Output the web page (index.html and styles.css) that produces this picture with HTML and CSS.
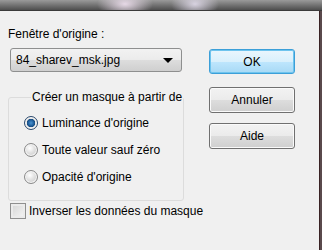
FILE: index.html
```html
<!DOCTYPE html>
<html lang="fr">
    <head>
        <meta charset="UTF-8" />
        <title>Masque</title>
        <link rel="stylesheet" href="styles.css">
    </head>
    <body>
        <div class="titlebar"></div>
        <div class="dialog">
            <div class="main">
                <div class="caption">Fenêtre d'origine :</div>
                <div class="select">
                    <span>84_sharev_msk.jpg</span>
                    <span class="arrow"></span>
                </div>
                <fieldset class="group">
                    <legend>Créer un masque à partir de</legend>
                    <label class="radio checked"><span class="dot"></span>Luminance d'origine</label>
                    <label class="radio"><span class="dot"></span>Toute valeur sauf zéro</label>
                    <label class="radio"><span class="dot"></span>Opacité d'origine</label>
                </fieldset>
                <label class="check"><span class="box"></span>Inverser les données du masque</label>
            </div>
            <div class="buttons">
                <button class="btn default">OK</button>
                <button class="btn cancel">Annuler</button>
                <button class="btn help">Aide</button>
            </div>
        </div>
    </body>
</html>
```

FILE: styles.css
```css
body {
    margin: 0;
    width: 322px;
    height: 250px;
    overflow: hidden;
    background: #5a4a4c;
    font-family: "Liberation Sans", Arial, sans-serif;
    font-size: 12px;
    color: #000;
    white-space: nowrap;
}
.titlebar {
    height: 10px;
    background:
        radial-gradient(ellipse 28px 14px at 125px 4px, rgba(236, 222, 236, 0.95), rgba(236, 222, 236, 0) 100%),
        radial-gradient(ellipse 24px 14px at 195px 4px, rgba(226, 220, 236, 0.9), rgba(226, 220, 236, 0) 100%),
        linear-gradient(#9a9a9a, #4e4e4e);
    border-bottom: 1px solid #3b3b3b;
}
.dialog {
    display: flex;
    width: 319px;
    height: 239px;
    background: #f0f0f0;
    border-right: 1px solid #3a2325;
}
.main {
    width: 180px;
    flex-shrink: 0;
    padding-left: 8px;
    box-sizing: border-box;
}
.caption {
    margin-top: 15px;
    height: 16px;
    line-height: 16px;
}
.select {
    display: flex;
    align-items: center;
    justify-content: space-between;
    margin: 6px -2px 0 2px;
    height: 22px;
    padding: 0 8px 0 5px;
    border: 1px solid #8e8f8f;
    border-radius: 3px;
    background: linear-gradient(#f2f2f2, #ebebeb 50%, #dddddd 51%, #cfcfcf);
}
.select .arrow {
    width: 0;
    height: 0;
    border-left: 5px solid transparent;
    border-right: 5px solid transparent;
    border-top: 5px solid #000;
}
.group {
    margin: 18px 0 0 0;
    padding: 10px 0 14px 15px;
    border: 1px solid #dcdcdc;
    border-radius: 3px;
    display: flex;
    flex-direction: column;
    gap: 9px;
}
.group legend {
    padding: 0 1px;
    margin-left: 7px;
    line-height: 14px;
}
.radio,
.check {
    display: flex;
    align-items: center;
    gap: 4px;
    height: 18px;
}
.radio .dot {
    flex-shrink: 0;
    width: 14px;
    height: 14px;
    border-radius: 50%;
    border: 1px solid #8a8a8a;
    box-sizing: border-box;
    background: radial-gradient(circle at 40% 35%, #ffffff, #e0e0e0 45%, #c4c4c4);
    box-shadow: inset 0 0 0 1px #f6f6f6;
}
.radio.checked .dot {
    border-color: #2b4a6e;
    background: radial-gradient(circle at 50% 50%, #4a93d0 0, #1d5c9a 3px, #174a7c 4px, #e6e6e6 4.5px, #cfcfcf 6px);
    box-shadow: inset 0 0 0 1px #fafafa;
}
.check {
    margin: 1px 0 0 2px;
    gap: 3px;
}
.check .box {
    flex-shrink: 0;
    width: 16px;
    height: 16px;
    box-sizing: border-box;
    border: 1px solid #8f8f8f;
    background: linear-gradient(135deg, #d4d4d4, #f6f6f6);
    box-shadow: inset 0 0 0 2px #ebebeb;
}
.buttons {
    display: flex;
    flex-direction: column;
    padding: 38px 0 0 29px;
}
.btn {
    width: 86px;
    height: 26px;
    font-family: inherit;
    font-size: 12px;
    border: 1px solid #707070;
    border-radius: 3px;
    background: linear-gradient(#f2f2f2, #ebebeb 50%, #dddddd 51%, #cfcfcf);
    box-shadow: inset 0 0 0 1px #fafafa;
    padding: 0;
}
.btn.default {
    height: 25px;
    border-color: #3c9fd8;
    background: linear-gradient(#eaf6fd, #d9f0fc 50%, #bee6fd 51%, #a7d9f5);
    box-shadow: inset 0 0 0 1px #6ec4ee;
}
.btn.cancel {
    margin-top: 13px;
}
.btn.help {
    margin-top: 10px;
}
```
